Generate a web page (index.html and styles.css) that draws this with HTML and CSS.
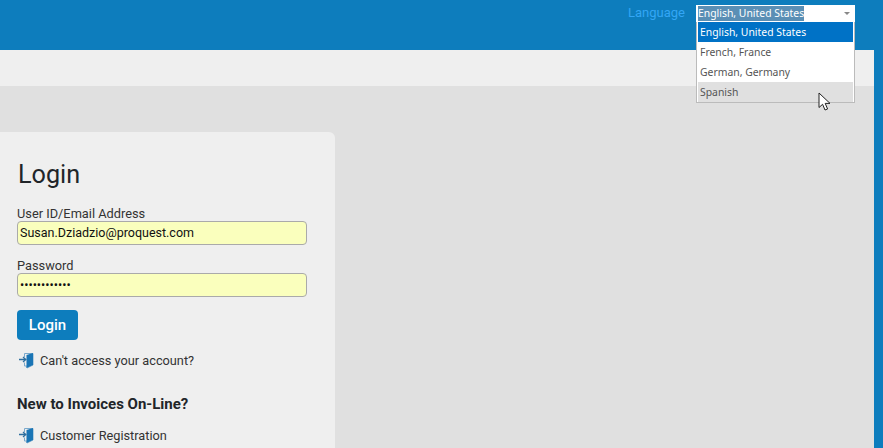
FILE: index.html
```html
<!DOCTYPE html>
<html lang="en">
<head>
<meta charset="utf-8">
<title>Login</title>
<link rel="stylesheet" href="styles.css">
</head>
<body>
<div class="page">
  <header class="topbar">
    <span class="lang-label">Language</span>
    <div class="lang">
      <div class="lang-box"><span class="lang-value">English, United States</span><span class="lang-arrow"></span></div>
      <ul class="lang-list">
        <li class="selected">English, United States</li>
        <li>French, France</li>
        <li>German, Germany</li>
        <li class="hover">Spanish</li>
      </ul>
      <svg class="cursor" width="14" height="20" viewBox="0 0 14 20"><path d="M1 1V15.5L4.6 12.3L7 18L9.6 17L7.2 11.4H12Z" fill="#fff" stroke="#222" stroke-width="1"/></svg>
    </div>
  </header>
  <div class="band"></div>
  <main class="main">
    <section class="panel">
      <h1>Login</h1>
      <label class="field-label">User ID/Email Address</label>
      <div class="input">Susan.Dziadzio@proquest.com</div>
      <label class="field-label second">Password</label>
      <div class="input pass">••••••••••••</div>
      <button class="btn" type="button">Login</button>
      <a class="link first"><svg class="door" width="16" height="17" viewBox="0 0 16 17"><path d="M6.5 5V1.5H15V13L9 16V14H6.5V10.5" fill="none" stroke="#7aa9cc" stroke-width="1"/><path d="M8.5 3L15 1V13L8.5 16Z" fill="#1a75b5"/><path d="M1 7.5H7M5 5L7.8 7.5L5 10" fill="none" stroke="#2f6f9f" stroke-width="1.3"/></svg>Can't access your account?</a>
      <h2>New to Invoices On-Line?</h2>
      <a class="link"><svg class="door" width="16" height="17" viewBox="0 0 16 17"><path d="M6.5 5V1.5H15V13L9 16V14H6.5V10.5" fill="none" stroke="#7aa9cc" stroke-width="1"/><path d="M8.5 3L15 1V13L8.5 16Z" fill="#1a75b5"/><path d="M1 7.5H7M5 5L7.8 7.5L5 10" fill="none" stroke="#2f6f9f" stroke-width="1.3"/></svg>Customer Registration</a>
    </section>
  </main>
</div>
</body>
</html>
```
FILE: styles.css
```css
* { box-sizing: border-box; }
html, body { margin: 0; height: 100%; overflow: hidden; }
body { font-family: Roboto, "Liberation Sans", sans-serif; color: #212529; background: #0d7dbd; }
.page { height: 448px; display: flex; flex-direction: column; padding-right: 9px; }
.topbar { height: 50px; flex: none; margin-right: -9px; background: #0d7dbd; display: flex; justify-content: flex-end; align-items: flex-start; padding: 5px 28px 0 0; }
.lang-label { color: #33a6f5; font-size: 13px; line-height: 16px; margin-right: 11px; }
.lang { position: relative; width: 159px; height: 17px; font-family: "Noto Sans", sans-serif; font-size: 10.4px; }
.lang-box { height: 17px; background: #fff; display: flex; align-items: center; justify-content: space-between; padding: 0 5px 0 2px; }
.lang-value { background: #5a8fb5; color: #fff; line-height: 15px; }
.lang-arrow { width: 0; height: 0; border-left: 3px solid transparent; border-right: 3px solid transparent; border-top: 3px solid #888; }
.lang-list { position: absolute; top: 17px; left: 0; width: 159px; height: 81px; margin: 0; padding: 0 1px; list-style: none; background: #fff; border: 1px solid #bbb; border-top: 0; z-index: 2; }
.lang-list li { height: 20px; line-height: 20px; padding-left: 2px; color: #555; }
.lang-list .selected { background: #0072c6; color: #fff; }
.lang-list .hover { background: #e0e0e0; }
.cursor { position: absolute; left: 122px; top: 87px; z-index: 3; }
.band { height: 36px; flex: none; background: #efefef; }
.main { flex: 1; background: #e0e0e0; padding-top: 46px; min-height: 0; }
.panel { width: 335px; height: 100%; background: #efefef; border-radius: 0 6px 0 0; padding: 27px 28px 0 17px; display: flex; flex-direction: column; align-items: flex-start; }
h1 { margin: 0 0 16px 1px; font-size: 25.2px; font-weight: 400; line-height: 31px; }
.field-label { font-size: 12.8px; line-height: 16px; margin-bottom: -1px; color: #333; }
.field-label.second { margin-top: 13px; }
.input { width: 290px; height: 24px; flex: none; background: #faffbd; border: 1px solid #aaa; border-radius: 4px; padding-left: 2px; font-size: 12.5px; line-height: 21px; color: #111; }
.pass { font-size: 12.5px; }
.btn { margin-top: 13px; width: 61px; height: 30px; flex: none; background: #0d7dbd; color: #fff; border: 0; border-radius: 4px; font: 500 15px Roboto, sans-serif; padding: 0; }
.link { display: flex; align-items: center; font-size: 12.75px; line-height: 17px; color: #333; }
.link.first { margin-top: 12px; }
.door { margin: 0 6px 0 1px; flex: none; }
h2 { margin: 26px 0 14px; font-size: 15px; font-weight: 700; line-height: 18px; }
```
